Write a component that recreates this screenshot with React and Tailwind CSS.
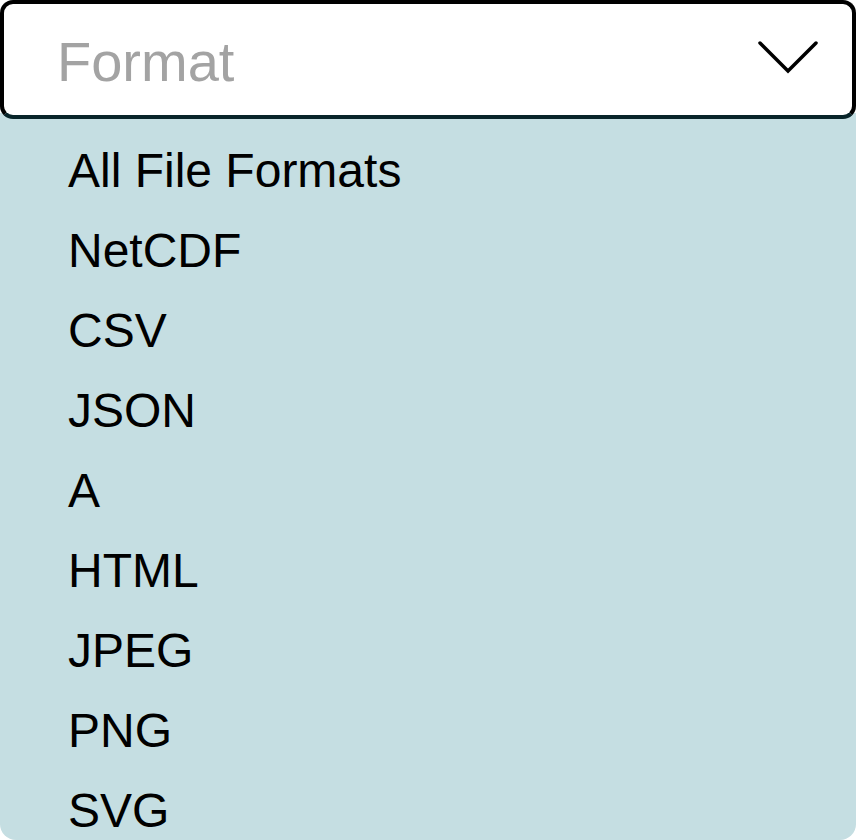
const formats = ['All File Formats', 'NetCDF', 'CSV', 'JSON', 'A', 'HTML', 'JPEG', 'PNG', 'SVG'];

export default function App() {
  return (
    <div className="w-[856px] h-[840px] bg-white flex flex-col font-['Liberation_Sans',Arial,sans-serif]">
      <div className="relative z-10 h-[119px] w-full flex items-start justify-between border-[4px] border-black border-b-[#08252a] rounded-[13px] bg-white pl-[53px] pr-[34px]">
        <span className="pt-[30px] text-[56px] leading-[56px] text-[#a3a3a3]">Format</span>
        <svg width="60" height="34" viewBox="0 0 60 34" className="mt-[37px]" fill="none">
          <path d="M2 2 L30 30 L58 2" stroke="black" strokeWidth="3.5" strokeLinecap="round" strokeLinejoin="miter" />
        </svg>
      </div>
      <ul className="-mt-[6px] h-[727px] overflow-hidden rounded-b-[16px] bg-[#c5dee2] pt-[18px] pl-[68px]">
        {formats.map((f) => (
          <li key={f} className="text-[48px] leading-[80px] text-black">
            {f}
          </li>
        ))}
      </ul>
    </div>
  );
}
